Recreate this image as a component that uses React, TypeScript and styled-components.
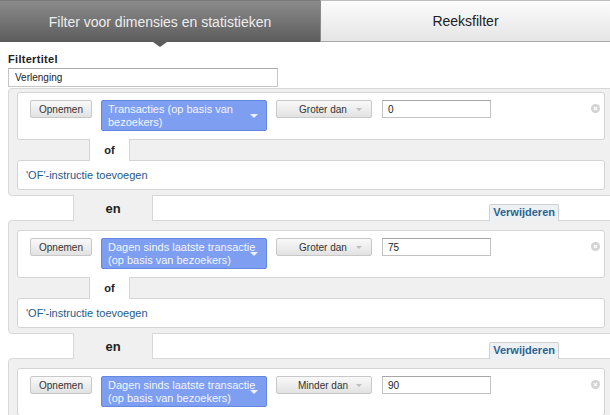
import React from "react";
import styled, { createGlobalStyle } from "styled-components";

const GlobalStyle = createGlobalStyle`
  html, body { margin: 0; padding: 0; background: #fff; overflow: hidden; }
  body { font-family: "Liberation Sans", Arial, sans-serif; color: #222; }
  * { box-sizing: border-box; }
`;

const Page = styled.div`
  width: 610px;
  height: 415px;
  overflow: hidden;
`;

const Header = styled.div`
  display: flex;
  height: 42px;
`;

const ActiveTab = styled.div`
  position: relative;
  width: 320px;
  display: flex;
  align-items: center;
  justify-content: center;
  background: linear-gradient(#8b8b8b, #5c5c5c);
  border-top: 1px solid #7a7a7a;
  color: #ededed;
  font-size: 14px;
  &::after {
    content: "";
    position: absolute;
    left: 153px;
    bottom: -5px;
    border-left: 7px solid transparent;
    border-right: 7px solid transparent;
    border-top: 5px solid #5c5c5c;
  }
`;

const Tab = styled.div`
  flex: 1;
  display: flex;
  align-items: center;
  justify-content: center;
  background: linear-gradient(#fcfcfc, #e5e5e5);
  border-top: 1px solid #bdbdbd;
  border-bottom: 1px solid #a9a9a9;
  border-left: 1px solid #8a8a8a;
  color: #222;
  font-size: 14px;
`;

const Content = styled.div`
  padding: 11px 0 0 8px;
  margin-right: -4px;
`;

const Label = styled.div`
  font-size: 11px;
  font-weight: bold;
  line-height: 13px;
  letter-spacing: 0.3px;
  color: #222;
`;

const TitleInput = styled.input`
  display: block;
  width: 270px;
  height: 19px;
  margin: 2px 0 0;
  padding: 0 6px;
  border: 1px solid #c6c6c6;
  border-top-color: #a9a9a9;
  font-family: inherit;
  font-size: 10px;
  color: #222;
  outline: none;
`;

const Group = styled.div<{ $first?: boolean }>`
  margin-top: ${(p) => (p.$first ? "1px" : "0")};
  padding: ${(p) => (p.$first ? "3px" : "9px")} 8px 5px 8px;
  background: #f0f0f0;
  border: 1px solid #d8d8d8;
  border-radius: 4px;
`;

const ConditionCard = styled.div`
  display: flex;
  align-items: flex-start;
  gap: 9px;
  padding: 7px 4px 8px 12px;
  background: #fff;
  border: 1px solid #d4d4d4;
  border-radius: 3px;
`;

const IncludeButton = styled.div`
  width: 62px;
  height: 18px;
  display: flex;
  align-items: center;
  justify-content: center;
  background: linear-gradient(#f9f9f9, #e2e2e2);
  border: 1px solid #c8c8c8;
  border-radius: 2px;
  font-size: 10px;
  color: #333;
`;

const MetricSelect = styled.div`
  position: relative;
  width: 166px;
  min-height: 29px;
  padding: 2px 6px 2px 6px;
  background: #7d9ef1;
  border: 1px solid #6487e0;
  border-radius: 2px;
  color: #f4f6ff;
  font-size: 11px;
  line-height: 12.5px;
`;

const SelectArrow = styled.span`
  position: absolute;
  right: 8px;
  top: 50%;
  margin-top: -2px;
  border-left: 4px solid transparent;
  border-right: 4px solid transparent;
  border-top: 4px solid #eef1ff;
`;

const OperatorButton = styled.div`
  position: relative;
  width: 96px;
  height: 18px;
  display: flex;
  align-items: center;
  justify-content: center;
  padding-right: 2px;
  background: linear-gradient(#f9f9f9, #e2e2e2);
  border: 1px solid #c8c8c8;
  border-radius: 2px;
  font-size: 10px;
  color: #333;
`;

const OperatorArrow = styled.span`
  position: absolute;
  right: 9px;
  top: 7px;
  border-left: 3px solid transparent;
  border-right: 3px solid transparent;
  border-top: 3px solid #bdbdbd;
`;

const ValueInput = styled.input`
  width: 109px;
  height: 18px;
  margin: 0 0 0 1px;
  padding: 0 5px;
  border: 1px solid #c2c2c2;
  border-top-color: #a5a5a5;
  font-family: inherit;
  font-size: 10px;
  color: #222;
  outline: none;
`;

const RemoveIcon = styled.svg`
  margin-left: auto;
  margin-top: 4px;
  width: 9px;
  height: 9px;
  flex: none;
`;

const OrRow = styled.div`
  position: relative;
  z-index: 1;
  display: flex;
  height: 22px;
  margin: -1px 0;
`;

const OrTab = styled.div`
  margin-left: 72px;
  width: 41px;
  display: flex;
  align-items: center;
  justify-content: center;
  background: #fff;
  border-left: 1px solid #d4d4d4;
  border-right: 1px solid #d4d4d4;
  font-size: 11px;
  font-weight: bold;
  color: #222;
`;

const AddOrCard = styled.div`
  height: 30px;
  display: flex;
  align-items: center;
  padding-left: 8px;
  background: #fff;
  border: 1px solid #d4d4d4;
  border-radius: 3px;
`;

const AddOrLink = styled.span`
  font-size: 11px;
  color: #1f5a8a;
`;

const AndRow = styled.div`
  position: relative;
  z-index: 1;
  display: flex;
  height: 26px;
  margin: -1px 0;
`;

const AndTab = styled.div`
  margin-left: 65px;
  width: 80px;
  display: flex;
  align-items: center;
  justify-content: center;
  background: #f0f0f0;
  border-left: 1px solid #d8d8d8;
  border-right: 1px solid #d8d8d8;
  font-size: 13px;
  font-weight: bold;
  color: #222;
`;

const RemoveTab = styled.div`
  align-self: flex-end;
  margin-left: auto;
  margin-right: 55px;
  height: 17px;
  padding: 0 3px;
  background: #eef1f3;
  border: 1px solid #d0d0d0;
  border-bottom: none;
  border-radius: 2px 2px 0 0;
  font-size: 11px;
  font-weight: bold;
  line-height: 15px;
  color: #2a6494;
`;

type Cond = { metric: string; op: string; value: string };

const CloseGlyph = () => (
  <RemoveIcon viewBox="0 0 9 9">
    <circle cx="4.5" cy="4.5" r="4.5" fill="#d2d2d2" />
    <path d="M2.8 2.8 L6.2 6.2 M6.2 2.8 L2.8 6.2" stroke="#fff" strokeWidth="1.2" />
  </RemoveIcon>
);

const FilterGroup = ({ c, first }: { c: Cond; first?: boolean }) => (
  <Group $first={first}>
    <ConditionCard>
      <IncludeButton>Opnemen</IncludeButton>
      <MetricSelect>
        {c.metric}
        <SelectArrow />
      </MetricSelect>
      <OperatorButton>
        {c.op}
        <OperatorArrow />
      </OperatorButton>
      <ValueInput value={c.value} readOnly />
      <CloseGlyph />
    </ConditionCard>
    <OrRow>
      <OrTab>of</OrTab>
    </OrRow>
    <AddOrCard>
      <AddOrLink>'OF'-instructie toevoegen</AddOrLink>
    </AddOrCard>
  </Group>
);

const AndSeparator = () => (
  <AndRow>
    <AndTab>en</AndTab>
    <RemoveTab>Verwijderen</RemoveTab>
  </AndRow>
);

const conditions: Cond[] = [
  { metric: "Transacties (op basis van bezoekers)", op: "Groter dan", value: "0" },
  { metric: "Dagen sinds laatste transactie (op basis van bezoekers)", op: "Groter dan", value: "75" },
  { metric: "Dagen sinds laatste transactie (op basis van bezoekers)", op: "Minder dan", value: "90" },
];

export default function App() {
  return (
    <Page>
      <GlobalStyle />
      <Header>
        <ActiveTab>Filter voor dimensies en statistieken</ActiveTab>
        <Tab>Reeksfilter</Tab>
      </Header>
      <Content>
        <Label>Filtertitel</Label>
        <TitleInput value="Verlenging" readOnly />
        {conditions.map((c, i) => (
          <React.Fragment key={i}>
            {i > 0 && <AndSeparator />}
            <FilterGroup c={c} first={i === 0} />
          </React.Fragment>
        ))}
      </Content>
    </Page>
  );
}
